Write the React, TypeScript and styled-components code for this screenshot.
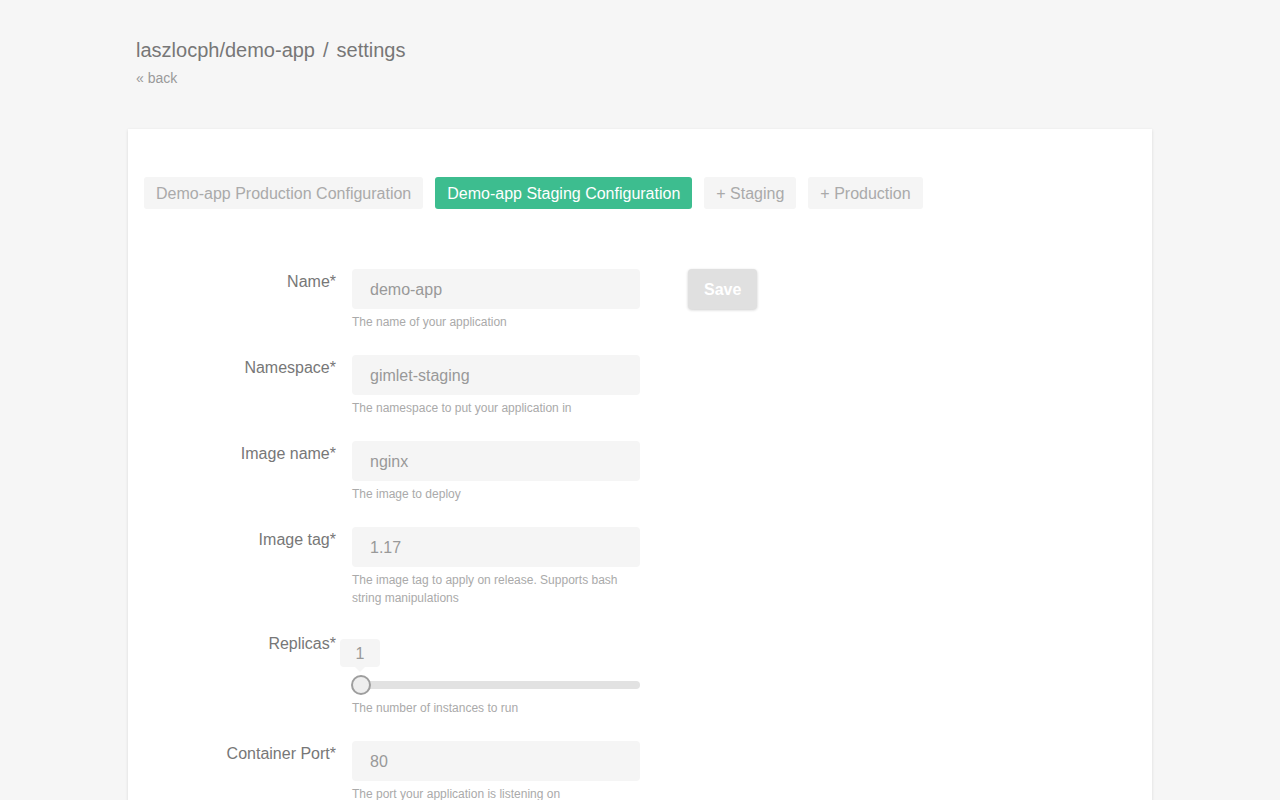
import React from "react";
import styled, { createGlobalStyle } from "styled-components";

const GlobalStyle = createGlobalStyle`
  html, body {
    margin: 0;
    padding: 0;
    background: #f6f6f6;
    font-family: "Liberation Sans", Arial, Helvetica, sans-serif;
  }
  * { box-sizing: border-box; }
`;

const Page = styled.div`
  width: 1024px;
  margin: 0 auto;
  padding-top: 38px;
`;

const Header = styled.header`
  padding-left: 8px;
  margin-bottom: 41px;
`;

const Title = styled.h1`
  margin: 0;
  font-size: 20px;
  line-height: 24px;
  font-weight: normal;
  color: #777;
  display: flex;
`;

const Slash = styled.span`
  margin: 0 8px;
`;

const Back = styled.a`
  display: block;
  margin-top: 6px;
  font-size: 14px;
  line-height: 20px;
  color: #9a9a9a;
  text-decoration: none;
`;

const Card = styled.section`
  background: #fff;
  box-shadow: 0 1px 3px rgba(0, 0, 0, 0.12);
  padding: 48px 16px 60px;
  min-height: 700px;
`;

const Tabs = styled.nav`
  display: flex;
  gap: 12px;
  margin-bottom: 60px;
`;

const Tab = styled.button<{ $active?: boolean }>`
  height: 32px;
  padding: 2px 12px 0;
  border: none;
  border-radius: 3px;
  font-family: inherit;
  font-size: 16px;
  background: ${(p) => (p.$active ? "#3dbd8f" : "#f5f5f5")};
  color: ${(p) => (p.$active ? "#fff" : "#aaa")};
  cursor: pointer;
`;

const Body = styled.div`
  display: flex;
  align-items: flex-start;
`;

const Form = styled.div`
  display: flex;
  flex-direction: column;
  gap: 24px;
`;

const Row = styled.div`
  display: grid;
  grid-template-columns: 192px 288px;
  column-gap: 16px;
`;

const Label = styled.label`
  padding-top: 1px;
  text-align: right;
  font-size: 16px;
  line-height: 24px;
  color: #777;
`;

const Field = styled.div`
  display: flex;
  flex-direction: column;
`;

const Input = styled.input`
  height: 40px;
  width: 288px;
  border: none;
  border-radius: 4px;
  background: #f5f5f5;
  padding: 2px 18px 0;
  font-family: inherit;
  font-size: 16px;
  color: #999;
  outline: none;
`;

const Help = styled.div<{ $gap?: number }>`
  margin-top: ${(p) => p.$gap ?? 4}px;
  font-size: 12px;
  line-height: 18px;
  color: #aaa;
`;

const SliderBox = styled.div`
  position: relative;
  padding-top: 50px;
`;

const Track = styled.div`
  position: relative;
  height: 8px;
  border-radius: 4px;
  background: #e2e2e2;
`;

const Thumb = styled.div`
  position: absolute;
  left: -1px;
  top: -6px;
  width: 20px;
  height: 20px;
  border-radius: 50%;
  background: #eee;
  border: 2px solid #9e9e9e;
`;

const Bubble = styled.div`
  position: absolute;
  left: -12px;
  top: 8px;
  width: 40px;
  height: 28px;
  border-radius: 4px;
  background: #f5f5f5;
  color: #999;
  font-size: 16px;
  line-height: 30px;
  text-align: center;
  &::after {
    content: "";
    position: absolute;
    left: 15px;
    bottom: -5px;
    border-left: 5px solid transparent;
    border-right: 5px solid transparent;
    border-top: 5px solid #f5f5f5;
  }
`;

const SaveButton = styled.button`
  margin-left: 48px;
  height: 40px;
  padding: 2px 16px 0;
  border: none;
  border-radius: 4px;
  background: #e0e0e0;
  color: #fff;
  font-family: inherit;
  font-weight: bold;
  font-size: 16px;
  box-shadow: 0 1px 3px rgba(0, 0, 0, 0.2);
`;

const fields = [
  { label: "Name*", value: "demo-app", help: "The name of your application" },
  { label: "Namespace*", value: "gimlet-staging", help: "The namespace to put your application in" },
  { label: "Image name*", value: "nginx", help: "The image to deploy" },
  {
    label: "Image tag*",
    value: "1.17",
    help: "The image tag to apply on release. Supports bash string manipulations",
  },
];

export default function App() {
  return (
    <>
      <GlobalStyle />
      <Page>
        <Header>
          <Title>
            <span>laszlocph/demo-app</span>
            <Slash>/</Slash>
            <span>settings</span>
          </Title>
          <Back href="#">« back</Back>
        </Header>
        <Card>
          <Tabs>
            <Tab>Demo-app Production Configuration</Tab>
            <Tab $active>Demo-app Staging Configuration</Tab>
            <Tab>+ Staging</Tab>
            <Tab>+ Production</Tab>
          </Tabs>
          <Body>
            <Form>
              {fields.map((f) => (
                <Row key={f.label}>
                  <Label>{f.label}</Label>
                  <Field>
                    <Input defaultValue={f.value} />
                    <Help>{f.help}</Help>
                  </Field>
                </Row>
              ))}
              <Row>
                <Label>Replicas*</Label>
                <Field>
                  <SliderBox>
                    <Bubble>1</Bubble>
                    <Track>
                      <Thumb />
                    </Track>
                  </SliderBox>
                  <Help $gap={10}>The number of instances to run</Help>
                </Field>
              </Row>
              <Row>
                <Label>Container Port*</Label>
                <Field>
                  <Input defaultValue="80" />
                  <Help>The port your application is listening on</Help>
                </Field>
              </Row>
            </Form>
            <SaveButton>Save</SaveButton>
          </Body>
        </Card>
      </Page>
    </>
  );
}
